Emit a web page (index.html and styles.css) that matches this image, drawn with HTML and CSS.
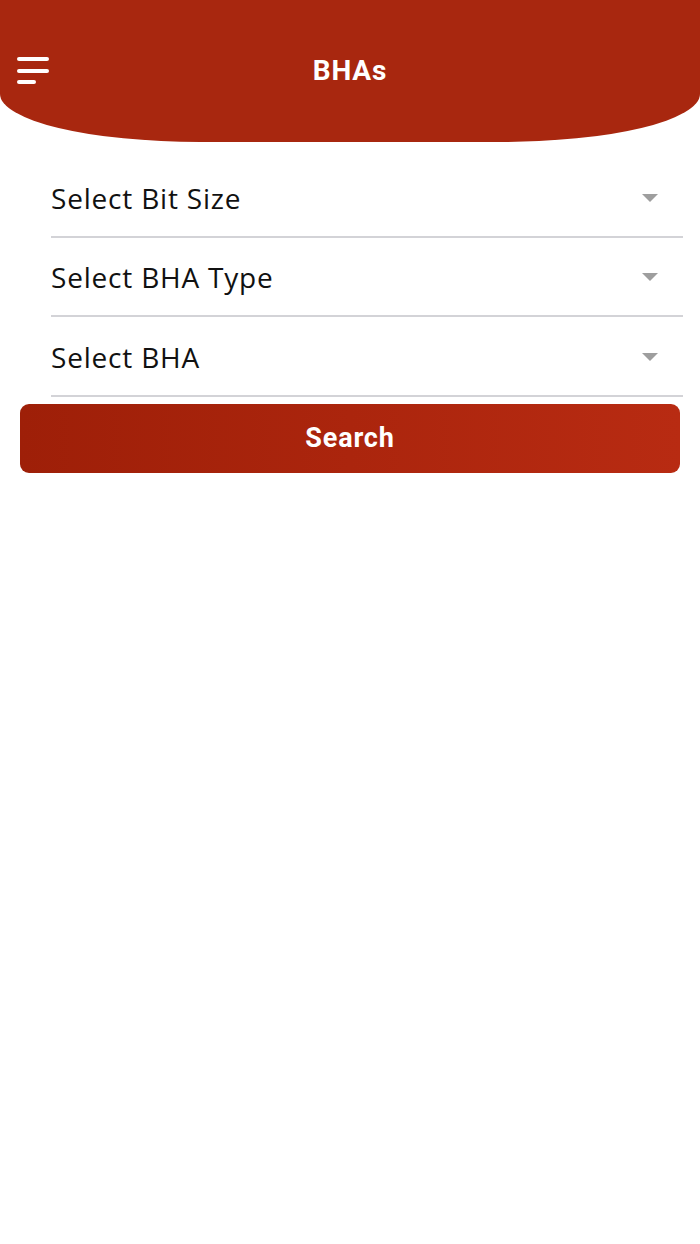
FILE: index.html
```html
<!DOCTYPE html>
<html>
<head>
<meta charset="utf-8">
<link rel="stylesheet" href="styles.css">
</head>
<body>
<header class="app-header">
  <button class="menu-btn" aria-label="Menu">
    <svg width="34" height="28" viewBox="0 0 34 28">
      <line x1="2" y1="2" x2="30" y2="2" stroke="#fff" stroke-width="4" stroke-linecap="round"/>
      <line x1="2" y1="14" x2="30" y2="14" stroke="#fff" stroke-width="4" stroke-linecap="round"/>
      <line x1="2" y1="25" x2="17" y2="25" stroke="#fff" stroke-width="4" stroke-linecap="round"/>
    </svg>
  </button>
  <h1 class="title">BHAs</h1>
</header>
<main class="content">
  <div class="field"><span class="label">Select Bit Size</span><span class="caret"></span></div>
  <div class="field"><span class="label">Select BHA Type</span><span class="caret"></span></div>
  <div class="field"><span class="label">Select BHA</span><span class="caret"></span></div>
  <button class="search-btn">Search</button>
</main>
</body>
</html>
```

FILE: styles.css
```css
* { box-sizing: border-box; }
html, body { margin: 0; padding: 0; background: #fff; }
body { font-family: "Open Sans", "Noto Sans", sans-serif; width: 700px; height: 1244px; }

.app-header {
  position: relative;
  height: 142px;
  background: #a8270f;
  border-radius: 0 0 200px 200px / 0 0 48px 48px;
  display: flex;
  align-items: flex-start;
  justify-content: center;
}
.menu-btn {
  position: absolute;
  left: 17px;
  top: 57px;
  padding: 0;
  border: 0;
  background: none;
  line-height: 0;
}
.title {
  margin: 0;
  margin-top: 53px;
  color: #fff;
  font-family: "Roboto", "Open Sans", sans-serif;
  font-weight: 700;
  font-size: 28px;
  line-height: 36px;
  letter-spacing: 0.8px;
}

.content {
  padding: 16px 17px 0 20px;
  display: flex;
  flex-direction: column;
}
.field {
  margin-left: 31px;
  height: 79.5px;
  border-bottom: 2px solid #d3d3d7;
  display: flex;
  align-items: center;
  justify-content: space-between;
  padding-right: 25px;
  padding-top: 2px;
}
.label {
  font-size: 28px;
  color: #111;
  letter-spacing: 0.8px;
}
.caret {
  width: 0;
  height: 0;
  border-left: 8px solid transparent;
  border-right: 8px solid transparent;
  border-top: 8px solid #9e9e9e;
}
.search-btn {
  margin-top: 7px;
  margin-right: 3px;
  height: 69px;
  border: 0;
  border-radius: 9px;
  background: linear-gradient(90deg, #9e1f08 0%, #b82b12 100%);
  color: #fff;
  font-family: "Roboto", "Open Sans", sans-serif;
  font-weight: 700;
  font-size: 27px;
  letter-spacing: 0.8px;
}
```
